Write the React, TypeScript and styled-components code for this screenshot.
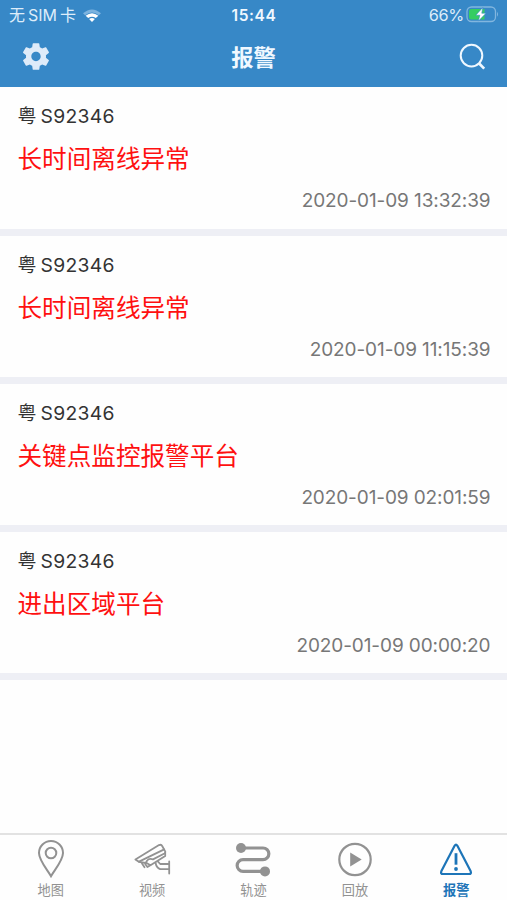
import React from "react";
import styled, { createGlobalStyle } from "styled-components";

const GlobalStyle = createGlobalStyle`
  * { box-sizing: border-box; }
  body { margin: 0; background: #fff; }
`;

const Screen = styled.div`
  display: flex;
  flex-direction: column;
  width: 507px;
  height: 900px;
  overflow: hidden;
  background: #fefefe;
  color: #333;
  font-family: Inter, "Noto Sans CJK SC", sans-serif;
  white-space: nowrap;
`;

const Header = styled.header`
  flex: none;
  height: 87.3px;
  background: #3788c7;
  color: #f0f8ff;
`;

const StatusBar = styled.div`
  display: grid;
  grid-template-columns: 1fr auto 1fr;
  align-items: center;
  height: 29px;
  padding: 0 8px 0 9px;
  font-size: 16px;
  line-height: 29px;
`;

const Carrier = styled.div`
  display: flex;
  align-items: center;
  gap: 3px;
  color: #deedfa;
  svg { margin-left: 3px; }
`;

const Clock = styled.div`
  padding-top: 1px;
  font-size: 15.5px;
  font-weight: 600;
  letter-spacing: 0.6px;
`;

const Battery = styled.div`
  display: flex;
  align-items: center;
  justify-content: flex-end;
  gap: 2px;
  color: #deedfa;
  svg { margin-bottom: 1px; }
`;

const Percent = styled.span`
  font-size: 16.3px;
  letter-spacing: -0.3px;
`;

const NavBar = styled.div`
  display: grid;
  grid-template-columns: 80px 1fr 80px;
  align-items: center;
  height: 56px;
  padding: 0 20px;
`;

const NavButton = styled.button<{ $end?: boolean }>`
  display: flex;
  justify-content: ${(p) => (p.$end ? "flex-end" : "flex-start")};
  padding: 0;
  border: 0;
  background: none;
  color: ${(p) => (p.$end ? "#f0f8ff" : "#deebf9")};
`;

const Title = styled.h1`
  margin: 0;
  padding-top: 1px;
  text-align: center;
  font-size: 22.3px;
  line-height: 30px;
  font-weight: 700;
`;

const AlarmList = styled.main`
  flex: 1;
  min-height: 0;
`;

const AlarmItem = styled.article`
  display: flex;
  flex-direction: column;
  height: 148.3px;
  padding: 15px 16.5px 0 17.5px;
  border-bottom: 7px solid #eeeff5;
`;

const Plate = styled.div`
  display: flex;
  align-items: center;
  gap: 4px;
  height: 28px;
  font-size: 19.3px;
  line-height: 28px;
  letter-spacing: 0.3px;
`;

const Region = styled.span`
  padding-top: 2px;
  font-size: 19px;
  letter-spacing: 0;
`;

const Reason = styled.div`
  height: 34px;
  margin-top: 12px;
  font-size: 24.6px;
  line-height: 34px;
  color: #ff1010;
`;

const Time = styled.time`
  align-self: flex-end;
  height: 26px;
  margin-top: 12px;
  font-size: 19px;
  line-height: 26px;
  letter-spacing: -0.1px;
  color: #777;
`;

const TabBar = styled.nav`
  flex: none;
  display: grid;
  grid-template-columns: repeat(5, 1fr);
  height: 67px;
  border-top: 2px solid #e2e2e2;
`;

const Tab = styled.button<{ $active?: boolean }>`
  display: flex;
  flex-direction: column;
  align-items: center;
  padding: 4px 0 0;
  border: 0;
  background: none;
  font-family: inherit;
  font-size: 13.2px;
  line-height: 20px;
  font-weight: ${(p) => (p.$active ? 700 : 400)};
  color: ${(p) => (p.$active ? "#1d75b8" : "#929292")};
  svg { margin-bottom: 1px; }
`;

const WifiIcon = () => (
  <svg width="20" height="15" viewBox="0 0 20 15">
    <path d="M1 5.2Q10-2.4 19 5.2L16.9 7.2Q10 1.6 3.1 7.2Z" fill="#7cb3df" />
    <path d="M3.6 7.7Q10 2.6 16.4 7.7L13.8 10.1Q10 7.2 6.2 10.1Z" fill="#fff" />
    <path d="M7.1 11Q10 8.9 12.9 11L10 14Z" fill="#fff" />
  </svg>
);

const BatteryIcon = () => (
  <svg width="33" height="17" viewBox="0 0 33 17">
    <rect x="1" y="1" width="28.5" height="14.5" rx="4.5" fill="none" stroke="#82b6df" strokeWidth="1.3" />
    <path d="M5.5 3H18.5V13.5H5.5Q3 13.5 3 11V5.5Q3 3 5.5 3Z" fill="#35cd61" />
    <path d="M31 5.8Q33 8.2 31 10.8Z" fill="#82b6df" />
    <path d="M16.8 1.4 9.8 9.2H13.8L12.4 15.1 20 7.2H15.8Z" fill="#fff" stroke="#3788c7" strokeWidth=".6" />
  </svg>
);

const GearIcon = () => (
  <svg width="32" height="32" viewBox="0 0.4 24 24" fill="currentColor">
    <path d="M19.43 12.98c.04-.32.07-.64.07-.98s-.03-.66-.07-.98l2.11-1.65c.19-.15.24-.42.12-.64l-2-3.46c-.12-.22-.39-.3-.61-.22l-2.49 1c-.52-.4-1.08-.73-1.69-.98l-.38-2.65A.488.488 0 0 0 14 2h-4c-.25 0-.46.18-.49.42l-.38 2.65c-.61.25-1.17.59-1.69.98l-2.49-1c-.23-.09-.49 0-.61.22l-2 3.46c-.13.22-.07.49.12.64l2.11 1.65c-.04.32-.07.65-.07.98s.03.66.07.98l-2.11 1.65c-.19.15-.24.42-.12.64l2 3.46c.12.22.39.3.61.22l2.49-1c.52.4 1.08.73 1.69.98l.38 2.65c.03.24.24.42.49.42h4c.25 0 .46-.18.49-.42l.38-2.65c.61-.25 1.17-.59 1.69-.98l2.49 1c.23.09.49 0 .61-.22l2-3.46c.12-.22.07-.49-.12-.64l-2.11-1.65zM12 15.5c-1.93 0-3.5-1.57-3.5-3.5s1.57-3.5 3.5-3.5 3.5 1.57 3.5 3.5-1.57 3.5-3.5 3.5z" />
  </svg>
);

const SearchIcon = () => (
  <svg width="28" height="28" viewBox="0 0 28 28" fill="none" stroke="currentColor" strokeWidth="2">
    <circle cx="12.5" cy="12.6" r="10.8" />
    <path d="M19.7 20 25.2 25.6" strokeWidth="2.6" />
  </svg>
);

const PinIcon = () => (
  <svg width="38" height="40" viewBox="0 0 38 40" fill="none" stroke="currentColor" strokeWidth="2">
    <path d="M19 37.2C15.5 31 7 21.5 7 14A12 12 0 0 1 31 14C31 21.5 22.5 31 19 37.2Z" />
    <circle cx="19" cy="14" r="5.3" />
  </svg>
);

const CameraIcon = () => (
  <svg
    width="38"
    height="40"
    viewBox="0 0 38 40"
    fill="none"
    stroke="currentColor"
    strokeWidth="1.8"
    strokeLinejoin="round"
    strokeLinecap="round"
  >
    <path d="M2.4 20.4 26 6.1Q28.2 5 29.2 7L32.3 12.6Q32.6 13.8 31.4 14.5L20 20.4Q16 19 14 21.8L12.7 24 5.8 22.8Z" />
    <path d="M6 22.6 31.2 10.4M32.2 14V17L17.5 26.2 13.6 24M9 24.6 11.5 28.2M12.2 25 14.4 28 17 26.4" />
    <path d="M24.8 22.4 27.2 25H35.5M22.6 24Q23.4 28.6 27.2 30.2H35.5M36.2 22.4V34.6" />
  </svg>
);

const RouteIcon = () => (
  <svg width="38" height="40" viewBox="0 0 38 40" fill="none" stroke="currentColor" strokeWidth="3.2">
    <path d="M7 9H29A5.8 5.8 0 0 1 29 20.7H9A5.8 5.8 0 0 0 9 32.4H31" />
    <circle cx="7" cy="9" r="5" fill="currentColor" stroke="none" />
    <circle cx="31" cy="32.4" r="5" fill="currentColor" stroke="none" />
  </svg>
);

const PlayIcon = () => (
  <svg width="38" height="40" viewBox="0 0 38 40" fill="none" stroke="currentColor" strokeWidth="2.2">
    <circle cx="19" cy="20.5" r="15.7" />
    <path d="M14.2 13.5V27.5L25.7 20.5Z" fill="currentColor" stroke="none" />
  </svg>
);

const AlarmIcon = () => (
  <svg width="38" height="40" viewBox="0 0 38 40" fill="none" stroke="currentColor" strokeWidth="2.2" strokeLinejoin="round">
    <path d="M17.6 6.8Q19 4.6 20.4 6.8L33.7 32.3Q34.7 35 32 35H6Q3.3 35 4.3 32.3Z" />
    <path d="M19 14.2V25.7" strokeWidth="2.8" />
    <circle cx="19" cy="30" r="1.9" fill="currentColor" stroke="none" />
  </svg>
);

const alarms = [
  { reason: "长时间离线异常", time: "2020-01-09 13:32:39" },
  { reason: "长时间离线异常", time: "2020-01-09 11:15:39" },
  { reason: "关键点监控报警平台", time: "2020-01-09 02:01:59" },
  { reason: "进出区域平台", time: "2020-01-09 00:00:20" },
];

const tabs = [
  { label: "地图", Icon: PinIcon },
  { label: "视频", Icon: CameraIcon },
  { label: "轨迹", Icon: RouteIcon },
  { label: "回放", Icon: PlayIcon },
  { label: "报警", Icon: AlarmIcon, active: true },
];

export default function App() {
  return (
    <Screen>
      <GlobalStyle />
      <Header>
        <StatusBar>
          <Carrier>
            <span>无</span>
            <span>SIM</span>
            <span>卡</span>
            <WifiIcon />
          </Carrier>
          <Clock>15:44</Clock>
          <Battery>
            <Percent>66%</Percent>
            <BatteryIcon />
          </Battery>
        </StatusBar>
        <NavBar>
          <NavButton aria-label="设置"><GearIcon /></NavButton>
          <Title>报警</Title>
          <NavButton $end aria-label="搜索"><SearchIcon /></NavButton>
        </NavBar>
      </Header>
      <AlarmList>
        {alarms.map((alarm) => (
          <AlarmItem key={alarm.time}>
            <Plate>
              <Region>粤</Region>
              <span>S92346</span>
            </Plate>
            <Reason>{alarm.reason}</Reason>
            <Time>{alarm.time}</Time>
          </AlarmItem>
        ))}
      </AlarmList>
      <TabBar>
        {tabs.map(({ label, Icon, active }) => (
          <Tab key={label} $active={active}>
            <Icon />
            {label}
          </Tab>
        ))}
      </TabBar>
    </Screen>
  );
}
